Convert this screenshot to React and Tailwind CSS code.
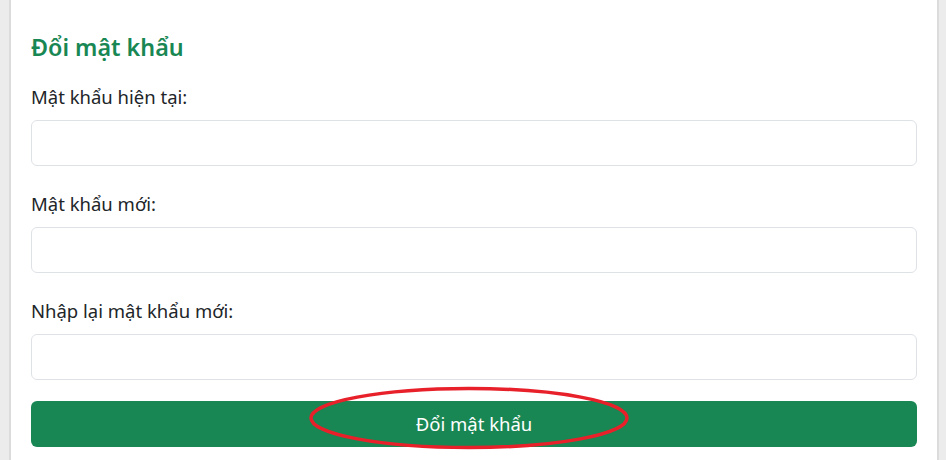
export default function App() {
  const fields = ["Mật khẩu hiện tại:", "Mật khẩu mới:", "Nhập lại mật khẩu mới:"];

  return (
    <div className="h-[460px] w-[946px] overflow-hidden bg-[#ececec] pl-[9px] pr-[7px] font-['Noto_Sans',sans-serif]">
      <div className="relative h-full border-x-2 border-[#dcdcdc] bg-white px-5 pt-[28px]">
        <h4 className="text-[23.3px] font-semibold leading-[38px] text-[#198754]">Đổi mật khẩu</h4>

        <form className="mt-[19px]">
          {fields.map((label) => (
            <div key={label} className="mb-[26px]">
              <label className="block text-[18.5px] leading-[24px] text-[#212529]">{label}</label>
              <input
                type="password"
                className="mt-[11px] block h-[46px] w-full rounded-[6px] border border-[#dee2e6] bg-white px-3"
              />
            </div>
          ))}
          <button
            type="button"
            className="-mt-[5px] flex h-[46px] w-full items-center justify-center rounded-[6px] bg-[#198754] text-[18.5px] text-white"
          >
            Đổi mật khẩu
          </button>
        </form>

        <svg className="pointer-events-none absolute left-[297px] top-[386px]" width="322" height="64" viewBox="0 0 322 64">
          <ellipse cx="161" cy="32" rx="158" ry="29.5" fill="none" stroke="#e8202a" strokeWidth="3.5" />
        </svg>
      </div>
    </div>
  );
}
